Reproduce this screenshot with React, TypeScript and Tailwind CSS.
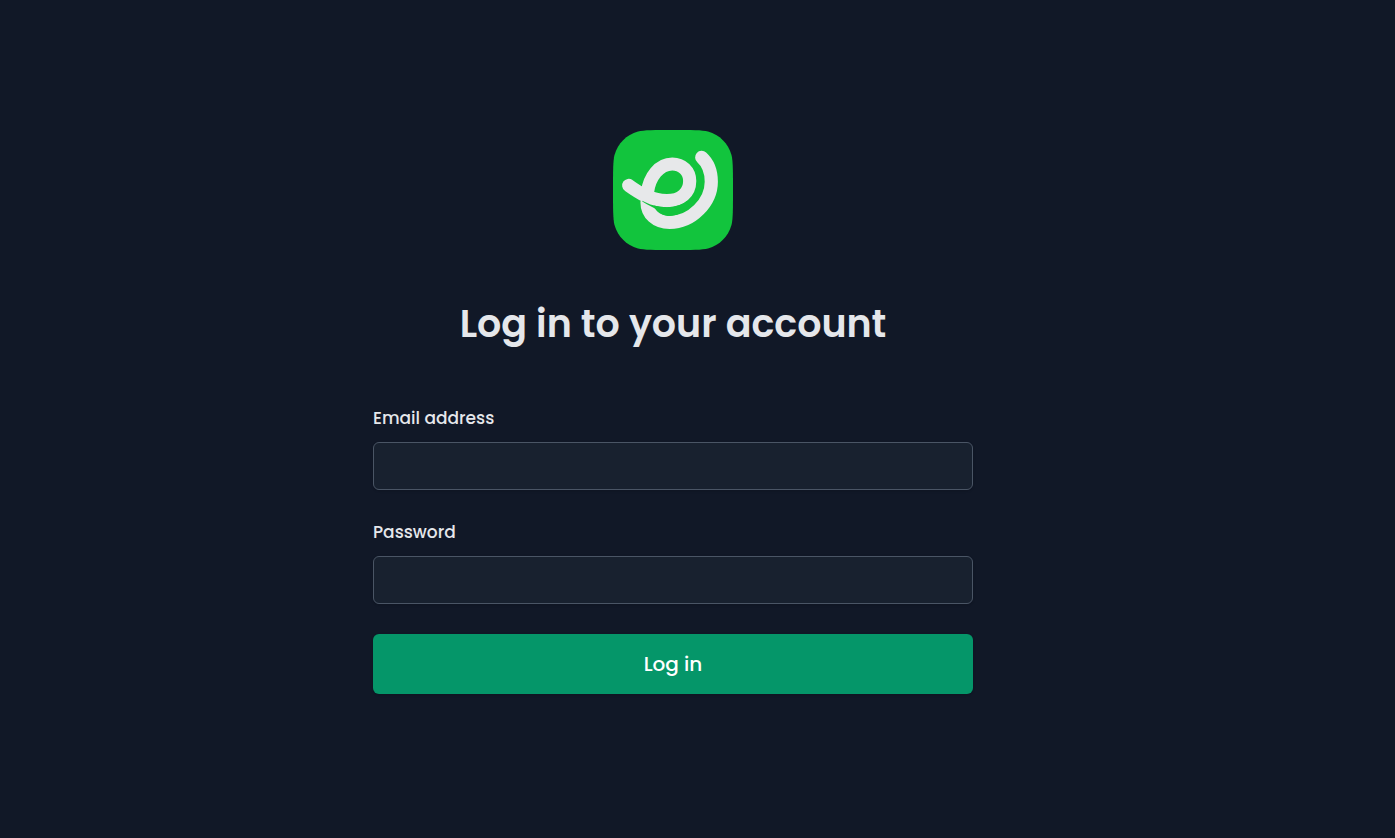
import { useState, type ComponentProps, type FormEvent } from "react";

function Logo() {
  return (
    <svg viewBox="0 0 120 120" className="h-30 w-30" role="img" aria-label="Logo">
      <path
        fill="#12c43d"
        d="M0 60C0 42 0 30.5 1.5 25C5 13.2 13.2 5 25 1.5C30.5 0 42 0 60 0S89.5 0 95 1.5C106.8 5 115 13.2 118.5 25C120 30.5 120 42 120 60S120 89.5 118.5 95C115 106.8 106.8 115 95 118.5C89.5 120 78 120 60 120S30.5 120 25 118.5C13.2 115 5 106.8 1.5 95C0 89.5 0 78 0 60Z"
      />
      <g
        fill="none"
        stroke="#e7e8ea"
        strokeWidth="13.2"
        strokeLinecap="round"
        strokeLinejoin="round"
      >
        <path d="M34 72C34 84 43 92.4 56.7 92.4C79 92.4 98.3 72 98.3 51.7C98.3 41 94.5 32.5 88.7 27.3" />
        <path d="M15.7 55.4C25 62 37 70.6 54 70.6C68 70.6 76.7 62.5 76.7 51C76.7 41 69 34 59.3 34C46 34 36.5 47 34.5 62" />
      </g>
      <path
        fill="#12c43d"
        d="M29.3 70.8C36 74.5 44 77.2 54 77.2C62 77.2 69 75 74 71L76 76C70 82.5 63 86 57 86C51 86 47 83.5 43.5 79.5C40 76.8 35 75 29.3 71.4Z"
      />
    </svg>
  );
}

type FieldProps = ComponentProps<"input"> & { id: string; label: string };

function Field({ id, label, ...rest }: FieldProps) {
  return (
    <div>
      <label htmlFor={id} className="block text-[17px] leading-6 font-medium text-gray-200">
        {label}
      </label>
      <input
        id={id}
        name={id}
        required
        className="mt-3 block h-12 w-full rounded-md border border-gray-600 bg-[#18212f] px-3 text-lg text-gray-200 shadow-sm outline-none focus:border-emerald-500"
        {...rest}
      />
    </div>
  );
}

export default function App() {
  const [email, setEmail] = useState("");
  const [password, setPassword] = useState("");

  function handleSubmit(e: FormEvent) {
    e.preventDefault();
  }

  return (
    <main className="flex min-h-screen flex-col items-center bg-[#111827] pt-[130px] pr-[49px] pb-12 font-[Poppins,Inter,sans-serif]">
      <Logo />

      <h1 className="mt-12 text-center text-[38px] leading-[52px] font-semibold text-gray-200">
        Log in to your account
      </h1>

      <form onSubmit={handleSubmit} className="mt-14 w-full max-w-[600px]">
        <div className="space-y-[30px]">
          <Field
            id="email"
            label="Email address"
            type="email"
            autoComplete="email"
            value={email}
            onChange={(e) => setEmail(e.target.value)}
          />
          <Field
            id="password"
            label="Password"
            type="password"
            autoComplete="current-password"
            value={password}
            onChange={(e) => setPassword(e.target.value)}
          />

          <button
            type="submit"
            className="flex h-15 w-full items-center justify-center rounded-md bg-[#059669] text-xl font-medium text-white shadow-sm hover:bg-[#047857]"
          >
            Log in
          </button>
        </div>
      </form>
    </main>
  );
}
